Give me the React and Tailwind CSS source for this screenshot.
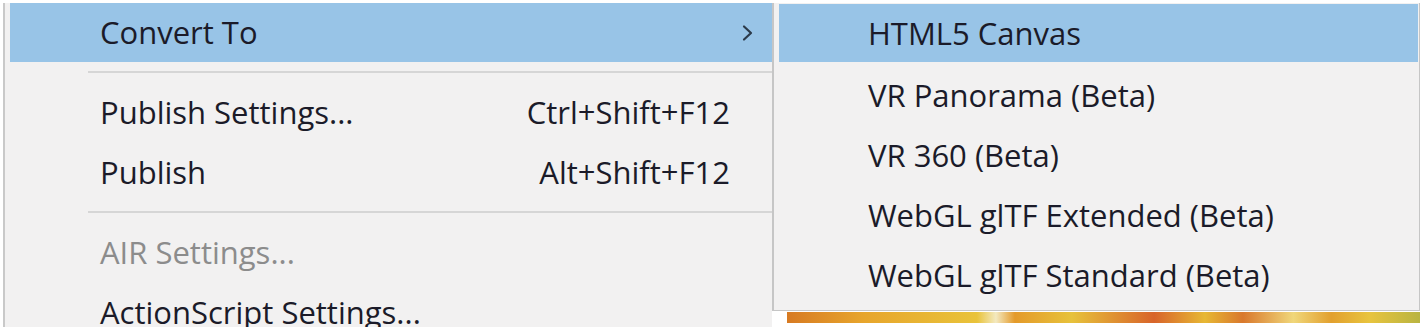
import React from "react";

const mainItems = [
  { type: "sep" },
  { label: "Publish Settings...", shortcut: "Ctrl+Shift+F12" },
  { label: "Publish", shortcut: "Alt+Shift+F12" },
  { type: "sep" },
  { label: "AIR Settings...", disabled: true },
  { label: "ActionScript Settings..." },
];

const subItems = [
  "VR Panorama (Beta)",
  "VR 360 (Beta)",
  "WebGL glTF Extended (Beta)",
  "WebGL glTF Standard (Beta)",
];

const Chevron = () => (
  <svg width="16" height="18" viewBox="0 0 16 18" fill="none">
    <path d="M4 2.5l7 6.5-7 6.5" stroke="#2b3a4a" strokeWidth="2.2" strokeLinecap="round" strokeLinejoin="round" />
  </svg>
);

const App = () => {
  return (
    <div
      className="w-[1424px] h-[327px] overflow-hidden bg-white pt-[3px] pl-[3px] flex items-start text-[31px] text-[#1b1b29]"
      style={{ fontFamily: '"Open Sans", "Noto Sans", sans-serif' }}
    >
      {/* main menu */}
      <div className="w-[769px] h-[330px] border-l-2 border-[#c9c9c9] bg-[#f2f1f1] pl-[5px] shrink-0">
        <div className="h-[59px] bg-[#98c4e7] flex items-center">
          <span className="pl-[90px] flex-1 leading-none">Convert To</span>
          <span className="w-[42px] pl-[10px] flex items-center">
            <Chevron />
          </span>
        </div>
        {mainItems.map((item, i) =>
          item.type === "sep" ? (
            <div key={i} className="h-[20px] flex items-center pl-[78px]">
              <div className="w-full h-[2px] bg-[#d6d6d6]" />
            </div>
          ) : (
            <div key={i} className="h-[60px] flex items-center">
              <span className={`pl-[90px] flex-1 leading-none whitespace-nowrap ${item.disabled ? "text-[#8c8c8c]" : ""}`}>
                {item.label}
              </span>
              {item.shortcut && <span className="leading-none">{item.shortcut}</span>}
              <span className="w-[42px]" />
            </div>
          )
        )}
      </div>

      {/* submenu */}
      <div className="w-[648px] shrink-0 flex flex-col">
        <div className="border-l-2 border-b border-r border-[#c6c6c6] bg-[#f2f1f1] pt-[1px] pb-[5px] pl-[5px] pr-[1px]">
          <div className="h-[58px] bg-[#98c4e7] flex items-center pl-[89px] leading-none">HTML5 Canvas</div>
          <div className="h-[3px]" />
          {subItems.map((s) => (
            <div key={s} className="h-[60px] flex items-center pl-[89px] leading-none whitespace-nowrap">
              {s}
            </div>
          ))}
        </div>
        <div className="mt-[1px] ml-[15px] h-[11px] bg-[linear-gradient(90deg,#d77a22_0%,#e7a52c_12%,#e9c33a_30%,#f3e9c0_33%,#e49a2a_36%,#e7c23b_45%,#d8642a_58%,#e7b834_66%,#d9782c_72%,#f0d77a_80%,#e2a02e_86%,#e8c43e_92%,#b9b441_100%)]" />
      </div>
    </div>
  );
};

export default App;
